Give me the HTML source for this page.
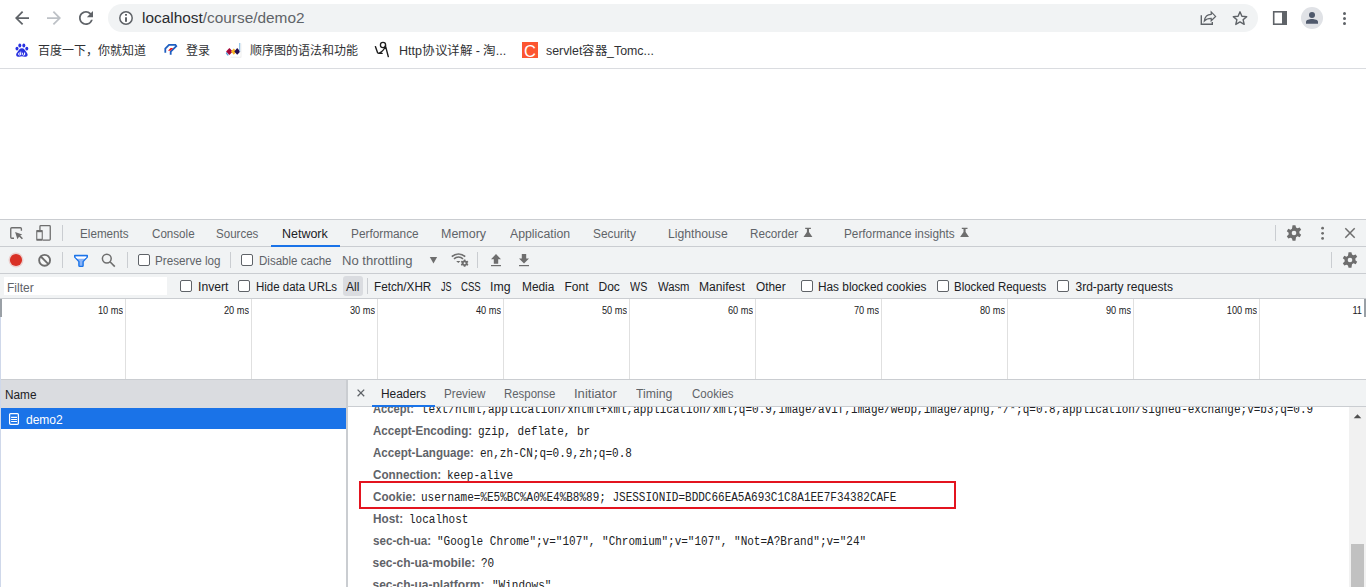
<!DOCTYPE html>
<html lang="zh-CN"><head><meta charset="utf-8">
<style>
*{margin:0;padding:0;box-sizing:border-box}
html,body{width:1366px;height:587px;overflow:hidden;background:#fff;font-family:"Liberation Sans",sans-serif;font-size:12px;color:#202124}
.a{position:absolute;white-space:pre;line-height:12px}
svg{position:absolute;overflow:visible}
.tb{background:#f1f3f4}
.hl{position:absolute;height:1px;background:#cacdd1}
.vl{position:absolute;width:1px;background:#cacdd1}
.g{color:#5f6368}
.mono{font-family:"Liberation Mono",monospace;font-size:12px;color:#202124;transform:scaleX(0.9167);transform-origin:0 0}
.hn{font-weight:bold;color:#5f6368}
.cb{position:absolute;width:12px;height:12px;border:1px solid #5f6368;border-radius:2px;background:#fff}
</style></head>
<body>
<!-- ===== Browser toolbar ===== -->
<svg style="left:0;top:0" width="1366" height="68">
  <g transform="translate(11.5 7.5) scale(.875)"><path fill="#5f6368" d="M20 11H7.83l5.59-5.59L12 4l-8 8 8 8 1.41-1.41L7.83 13H20v-2z"/></g>
  <g transform="translate(43.5 7.5) scale(.875)"><path fill="#bdc1c6" d="M12 4l-1.41 1.41L16.17 11H4v2h12.17l-5.58 5.59L12 20l8-8z"/></g>
  <g transform="translate(75.5 7.5) scale(.875)"><path fill="#5f6368" d="M17.65 6.35A7.958 7.958 0 0012 4c-4.42 0-7.99 3.58-7.99 8s3.57 8 7.99 8c3.73 0 6.84-2.55 7.73-6h-2.08A5.99 5.99 0 0112 18c-3.31 0-6-2.69-6-6s2.69-6 6-6c1.66 0 3.14.69 4.22 1.78L13 11h7V4l-2.35 2.35z"/></g>
</svg>
<div class="a" style="left:108px;top:4px;width:1150px;height:28px;border-radius:14px;background:#f1f3f4"></div>
<svg style="left:0;top:0" width="1366" height="68">
  <!-- info -->
  <circle cx="126" cy="18" r="6.2" fill="#fff" stroke="#5f6368" stroke-width="1.5"/>
  <rect x="125" y="14" width="2" height="1.7" fill="#5f6368"/>
  <rect x="125" y="17.3" width="2" height="4.5" fill="#5f6368"/>
  <!-- share -->
  <path d="M1201.3 15.2V24.3H1212.3V22" stroke="#5f6368" stroke-width="1.4" fill="none"/>
  <path d="M1204.3 21C1204.8 17 1207.5 14.3 1211.2 14.3V11.9L1215.6 16.4 1211.2 20.7V18.4C1208.3 18.4 1206 19.2 1204.3 21Z" stroke="#5f6368" stroke-width="1.2" fill="none" stroke-linejoin="miter"/>
  <!-- star -->
  <path d="M1240 11.8l1.9 4.4 4.8.4-3.6 3.1 1.1 4.7-4.2-2.5-4.2 2.5 1.1-4.7-3.6-3.1 4.8-.4z" stroke="#5f6368" stroke-width="1.4" fill="none" stroke-linejoin="round"/>
  <!-- sidebar -->
  <rect x="1273.7" y="11.8" width="12.4" height="12.4" stroke="#5f6368" stroke-width="1.6" fill="none"/>
  <rect x="1282" y="11" width="4.9" height="14" fill="#5f6368"/>
  <!-- profile -->
  <circle cx="1312" cy="18" r="11" fill="#e0e2e6"/>
  <circle cx="1312" cy="15" r="3" fill="#4f596c"/>
  <path d="M1306 23.8V21.9C1306 20 1309.3 19.1 1312 19.1S1318 20 1318 21.9V23.8z" fill="#4f596c"/>
  <!-- menu -->
  <circle cx="1344.5" cy="13.5" r="1.5" fill="#5f6368"/>
  <circle cx="1344.5" cy="18.5" r="1.5" fill="#5f6368"/>
  <circle cx="1344.5" cy="23.5" r="1.5" fill="#5f6368"/>

  <!-- baidu paw -->
  <g fill="#2932e1">
    <ellipse cx="19.8" cy="45.4" rx="1.5" ry="2"/>
    <ellipse cx="23.8" cy="45.4" rx="1.5" ry="2"/>
    <ellipse cx="17" cy="48.6" rx="1.5" ry="1.9"/>
    <ellipse cx="26.8" cy="48.6" rx="1.5" ry="1.9"/>
    <path d="M21.9 48.3c-2.2 0-3.2 2.2-4.4 3.6-1.3 1.4-1.6 2.5-1.2 3.5.5 1.2 1.8 1.4 2.8 1.3 1.1-.1 1.9-.4 2.8-.4s1.7.3 2.8.4c1 .1 2.3-.1 2.8-1.3.4-1-.1-2.1-1.2-3.5-1.2-1.4-2.2-3.6-4.4-3.6z"/>
  </g>
  <g stroke="#fff" stroke-width=".9" fill="none"><circle cx="19.5" cy="54" r="1.05"/><path d="M20.75 51.6v3.6M22.5 52.7v1.5a1.05 1.05 0 002.1 0v-1.5v2.5"/></g>
  <!-- login icon -->
  <path d="M165.3 52.8v-4.3l3.7-3.7h6.4l.9 1.3-5.6 5.6v3" stroke="#1f5fc1" stroke-width="1.8" fill="none" stroke-linejoin="miter"/>
  <path d="M168 50.8l2.6-2.8h2.6l-2.8 2.8z" fill="#e8131b"/>
  <!-- sequence icon -->
  <path d="M226.2 51.8l2.4 3 -.6 1.2-2.2-2.6z" fill="#5ba3da"/>
  <path d="M229.4 47.9l3.4 3.5-3.4 3.5-3.3-3.5z" fill="#a4073a"/>
  <path d="M233.8 48.5l2.9 3-2.9 3.3-2.8-3.3z" fill="#f6b526"/>
  <path d="M237.2 48.1l3.1 3.3-3.1 3.4-2.9-3.4z" fill="#230c52"/>
  <rect x="239.1" y="43" width="1.2" height="8.6" fill="#8cc3ea"/>
  <path d="M230.5 57.3h10.6M241 43.5v13.8" stroke="#e8e8e8" stroke-width="0.7"/>
  <!-- http icon -->
  <circle cx="383" cy="45" r="2.6" stroke="#1d1d1d" stroke-width="1.3" fill="none"/>
  <path d="M375.4 46.6l2.2 6.2 1.2.6h3.3M385.5 45.6c-.8 3-2.5 5.6-6.2 7.6M385.6 46.4l2.7 10.2" stroke="#1d1d1d" stroke-width="1.4" fill="none" stroke-linecap="round"/>
</svg>
<div class="a" style="left:142px;top:10px;font-size:15.4px;line-height:15px;color:#2a2b2e">localhost<span style="color:#5f6368">/course/demo2</span></div>

<!-- bookmarks -->
<div class="a" style="left:38px;top:45px;color:#303134">百度一下，你就知道</div>
<div class="a" style="left:186px;top:45px;color:#303134">登录</div>
<div class="a" style="left:250px;top:45px;color:#303134">顺序图的语法和功能</div>
<div class="a" style="left:399px;top:45px;color:#303134;transform:scaleX(1.045);transform-origin:0 0">Http协议详解 - 淘...</div>
<div class="a" style="left:546px;top:45px;color:#303134;transform:scaleX(1.03);transform-origin:0 0">servlet容器_Tomc...</div>
<div class="a" style="left:522px;top:42px;width:16px;height:16px;background:#fc5531"></div>
<div class="a" style="left:522px;top:42.5px;width:16px;height:16px;color:#fff;font-size:16.5px;line-height:16px;text-align:center">C</div>
<div class="hl" style="left:0;top:68px;width:1366px;background:#dadce0"></div>

<!-- ===== DevTools ===== -->
<div class="a tb" style="left:0;top:220px;width:1366px;height:79px"></div>
<div class="hl" style="left:0;top:219px;width:1366px"></div>
<div class="hl" style="left:0;top:246px;width:1366px"></div>
<div class="hl" style="left:0;top:273px;width:1366px"></div>
<div class="hl" style="left:0;top:298px;width:1366px"></div>

<svg style="left:0;top:219px" width="1366" height="80">
  <!-- inspect -->
  <path d="M14 19.25H11.75a1 1 0 01-1-1V9.75a1 1 0 011-1H20.4a1 1 0 011 1V11.8" stroke="#6e6e6e" stroke-width="1.35" fill="none"/>
  <path d="M15.1 13.1L22.2 15.4 19.6 17 17.4 20.2z" fill="#6e6e6e"/>
  <path d="M19.2 16.6L22.4 19.8" stroke="#6e6e6e" stroke-width="1.5"/>
  <!-- device -->
  <path d="M39.95 11V7.45a.8.8 0 01.8-.8h8.7a.8.8 0 01.8.8v12.9a.8.8 0 01-.8.8H42.8" stroke="#6e6e6e" stroke-width="1.3" fill="none"/>
  <rect x="36.2" y="11" width="6.6" height="10.8" rx=".8" fill="#6e6e6e"/>
  <rect x="37.3" y="13.2" width="4.4" height="6.6" fill="#f1f3f4"/>
  <rect x="62" y="6" width="1" height="16" fill="#cacdd1"/>
  <!-- flasks -->
  <path d="M805.2 8.7h5.7v1.2h-1.9v3l3.4 5h-8.9l3.4-5v-3h-1.7z" fill="#6e6e6e"/>
  <path d="M961.8 8.7h5.7v1.2h-1.9v3l3.4 5h-8.9l3.4-5v-3h-1.7z" fill="#6e6e6e"/>
  <!-- right separators & icons -->
  <rect x="1275" y="6" width="1" height="16" fill="#cacdd1"/>
  <g transform="translate(1294 14) scale(1.12)" fill="#6e6e6e">
    <path d="M-1.3-7h2.6l.5 2.1 1.3.7 2-.8 1.3 2.2-1.6 1.4v1.6l1.6 1.4-1.3 2.2-2-.8-1.3.7L1.3 7h-2.6l-.5-2.1-1.3-.7-2 .8-1.3-2.2 1.6-1.4v-1.6l-1.6-1.4 1.3-2.2 2 .8 1.3-.7z"/>
  </g>
  <circle cx="1294" cy="14" r="2.3" fill="#f1f3f4"/>
  <circle cx="1322.6" cy="9.2" r="1.4" fill="#6e6e6e"/>
  <circle cx="1322.6" cy="14.3" r="1.4" fill="#6e6e6e"/>
  <circle cx="1322.6" cy="19.4" r="1.4" fill="#6e6e6e"/>
  <path d="M1345.3 9.3l9.4 9.4M1354.7 9.3l-9.4 9.4" stroke="#6e6e6e" stroke-width="1.5"/>

  <!-- toolbar row -->
  <circle cx="16" cy="41" r="7.5" fill="#d93025" opacity=".18"/>
  <circle cx="16" cy="41" r="6.1" fill="#d93025"/>
  <circle cx="44.6" cy="41.3" r="5.45" stroke="#6e6e6e" stroke-width="1.9" fill="#f8f9f9"/>
  <path d="M40.8 37.5L48.4 45.1" stroke="#6e6e6e" stroke-width="1.9"/>
  <rect x="62" y="33" width="1" height="16" fill="#cacdd1"/>
  <path d="M74.7 36.4h12.6v1.6l-4.2 4.6v4a.8.8 0 01-.8.8h-2.6a.8.8 0 01-.8-.8v-4l-4.2-4.6z" fill="#8ab4f8" stroke="#1a73e8" stroke-width="1.4" stroke-linejoin="round"/>
  <path d="M75.8 37.7h10.4v.5l-1.4 1.5h-7.6l-1.4-1.5z" fill="#fff"/>
  <circle cx="106.8" cy="39.6" r="4.4" stroke="#6e6e6e" stroke-width="1.5" fill="none"/>
  <path d="M110 42.8l4.8 4.8" stroke="#6e6e6e" stroke-width="1.6"/>
  <rect x="127" y="33" width="1" height="16" fill="#cacdd1"/>
  <rect x="230" y="33" width="1" height="16" fill="#cacdd1"/>
  <path d="M429.8 37.9h7.3l-3.65 6.7z" fill="#6e6e6e"/>
  <!-- wifi -->
  <path d="M451.8 37.6a9.6 9.6 0 0113.4 0M454 39.9a6.4 6.4 0 019 0" stroke="#6e6e6e" stroke-width="1.5" fill="none"/>
  <path d="M456.2 42.1h4.2l-2.1 2z" fill="#6e6e6e"/>
  <g transform="translate(464.6 44.2)" fill="#6e6e6e">
    <path d="M-.8-3.6h1.6l.3 1.1.8.4 1.1-.4.8 1.3-.9.8v.8l.9.8-.8 1.3-1.1-.4-.8.4-.3 1.1h-1.6l-.3-1.1-.8-.4-1.1.4-.8-1.3.9-.8v-.8l-.9-.8.8-1.3 1.1.4.8-.4z"/>
  </g>
  <circle cx="464.6" cy="44.2" r="1" fill="#f1f3f4"/>
  <rect x="477" y="33" width="1" height="16" fill="#cacdd1"/>
  <path d="M496 35l5 5.2h-2.8v4.5h-4.4v-4.5h-2.8z" fill="#6e6e6e"/>
  <rect x="491" y="46" width="10" height="1.2" fill="#6e6e6e"/>
  <path d="M524 44.6l5-5.2h-2.8v-4.5h-4.4v4.5h-2.8z" fill="#6e6e6e"/>
  <rect x="519" y="46" width="10" height="1.2" fill="#6e6e6e"/>
  <rect x="1331" y="33" width="1" height="16" fill="#cacdd1"/>
  <g transform="translate(1350 41) scale(1.12)" fill="#6e6e6e">
    <path d="M-1.3-7h2.6l.5 2.1 1.3.7 2-.8 1.3 2.2-1.6 1.4v1.6l1.6 1.4-1.3 2.2-2-.8-1.3.7L1.3 7h-2.6l-.5-2.1-1.3-.7-2 .8-1.3-2.2 1.6-1.4v-1.6l-1.6-1.4 1.3-2.2 2 .8 1.3-.7z"/>
  </g>
  <circle cx="1350" cy="41" r="2.3" fill="#f1f3f4"/>
</svg>

<!-- tab labels -->
<div class="a g" style="left:79.53px;top:228px;transform:scaleX(0.9730);transform-origin:0 0">Elements</div>
<div class="a g" style="left:151.60px;top:228px;transform:scaleX(0.9680);transform-origin:0 0">Console</div>
<div class="a g" style="left:216.44px;top:228px;transform:scaleX(0.9630);transform-origin:0 0">Sources</div>
<div class="a" style="left:281.66px;top:228px;color:#202124;transform:scaleX(1.0400);transform-origin:0 0">Network</div>
<div class="a g" style="left:350.81px;top:228px;transform:scaleX(0.9850);transform-origin:0 0">Performance</div>
<div class="a g" style="left:440.96px;top:228px;transform:scaleX(1.0400);transform-origin:0 0">Memory</div>
<div class="a g" style="left:509.90px;top:228px;transform:scaleX(1.0240);transform-origin:0 0">Application</div>
<div class="a g" style="left:592.51px;top:228px;transform:scaleX(0.9880);transform-origin:0 0">Security</div>
<div class="a g" style="left:667.68px;top:228px;transform:scaleX(1.0160);transform-origin:0 0">Lighthouse</div>
<div class="a g" style="left:749.82px;top:228px;transform:scaleX(0.9750);transform-origin:0 0">Recorder</div>
<div class="a g" style="left:843.92px;top:228px;transform:scaleX(0.9820);transform-origin:0 0">Performance insights</div>
<div class="a" style="left:271px;top:245px;width:69px;height:2px;background:#1a73e8"></div>

<!-- toolbar row 2 -->
<div class="cb" style="left:138px;top:254px"></div>
<div class="a g" style="left:155.43px;top:255px;transform:scaleX(0.9730);transform-origin:0 0">Preserve log</div>
<div class="cb" style="left:241px;top:254px"></div>
<div class="a g" style="left:258.74px;top:255px;transform:scaleX(0.9620);transform-origin:0 0">Disable cache</div>
<div class="a g" style="left:341.51px;top:255px;transform:scaleX(1.0890);transform-origin:0 0">No throttling</div>

<!-- filter row -->
<div class="a" style="left:4px;top:277px;width:163px;height:18px;background:#fff"></div>
<div class="a g" style="left:7px;top:282px">Filter</div>
<div class="cb" style="left:180px;top:280px"></div>
<div class="a" style="left:197.59px;top:281px;transform:scaleX(1.0140);transform-origin:0 0">Invert</div>
<div class="cb" style="left:238px;top:280px"></div>
<div class="a" style="left:255.64px;top:281px;transform:scaleX(0.9570);transform-origin:0 0">Hide data URLs</div>
<div class="a" style="left:343px;top:276px;width:20px;height:20px;border-radius:3px;background:#dadce0"></div>
<div class="a" style="left:346px;top:281px">All</div>
<div class="vl" style="left:367px;top:278px;height:16px"></div>
<div class="a" style="left:373.92px;top:281px;transform:scaleX(0.9770);transform-origin:0 0">Fetch/XHR</div>
<div class="a" style="left:440.50px;top:281px;transform:scaleX(0.7500);transform-origin:0 0">JS</div>
<div class="a" style="left:461.00px;top:281px;transform:scaleX(0.8000);transform-origin:0 0">CSS</div>
<div class="a" style="left:490.47px;top:281px;transform:scaleX(1.0260);transform-origin:0 0">Img</div>
<div class="a" style="left:521.91px;top:281px;transform:scaleX(0.9880);transform-origin:0 0">Media</div>
<div class="a" style="left:564.50px;top:281px">Font</div>
<div class="a" style="left:598.50px;top:281px">Doc</div>
<div class="a" style="left:630.00px;top:281px;transform:scaleX(0.8950);transform-origin:0 0">WS</div>
<div class="a" style="left:658.00px;top:281px;transform:scaleX(0.9390);transform-origin:0 0">Wasm</div>
<div class="a" style="left:698.99px;top:281px;transform:scaleX(1.0090);transform-origin:0 0">Manifest</div>
<div class="a" style="left:756.00px;top:281px;transform:scaleX(0.9870);transform-origin:0 0">Other</div>
<div class="cb" style="left:801px;top:280px"></div>
<div class="a" style="left:818.31px;top:281px;transform:scaleX(0.9850);transform-origin:0 0">Has blocked cookies</div>
<div class="cb" style="left:937px;top:280px"></div>
<div class="a" style="left:954.45px;top:281px;transform:scaleX(0.9540);transform-origin:0 0">Blocked Requests</div>
<div class="cb" style="left:1057px;top:280px"></div>
<div class="a" style="left:1075.50px;top:281px">3rd-party requests</div>

<!-- timeline overview -->
<div class="a" style="left:0;top:299px;width:1366px;height:80px;background:#fff"></div>
<div class="hl" style="left:0;top:379px;width:1366px"></div>
<div class="vl" style="left:125px;top:299px;height:80px;background:#e0e0e0"></div>
<div class="vl" style="left:251px;top:299px;height:80px;background:#e0e0e0"></div>
<div class="vl" style="left:377px;top:299px;height:80px;background:#e0e0e0"></div>
<div class="vl" style="left:503px;top:299px;height:80px;background:#e0e0e0"></div>
<div class="vl" style="left:629px;top:299px;height:80px;background:#e0e0e0"></div>
<div class="vl" style="left:755px;top:299px;height:80px;background:#e0e0e0"></div>
<div class="vl" style="left:881px;top:299px;height:80px;background:#e0e0e0"></div>
<div class="vl" style="left:1007px;top:299px;height:80px;background:#e0e0e0"></div>
<div class="vl" style="left:1133px;top:299px;height:80px;background:#e0e0e0"></div>
<div class="vl" style="left:1259px;top:299px;height:80px;background:#e0e0e0"></div>
<div class="a" style="left:0;top:299px;width:2px;height:18px;background:#9aa0a6"></div>
<div class="a" style="left:0;top:317px;width:1px;height:270px;background:#cfd8ea"></div>
<div class="a" style="left:1364px;top:299px;width:2px;height:18px;background:#9aa0a6"></div>
<div class="a" style="top:305.5px;left:0;width:123px;text-align:right;font-size:10px;line-height:10px;transform:scaleX(0.92);transform-origin:100% 0">10 ms</div>
<div class="a" style="top:305.5px;left:126px;width:123px;text-align:right;font-size:10px;line-height:10px;transform:scaleX(0.92);transform-origin:100% 0">20 ms</div>
<div class="a" style="top:305.5px;left:252px;width:123px;text-align:right;font-size:10px;line-height:10px;transform:scaleX(0.92);transform-origin:100% 0">30 ms</div>
<div class="a" style="top:305.5px;left:378px;width:123px;text-align:right;font-size:10px;line-height:10px;transform:scaleX(0.92);transform-origin:100% 0">40 ms</div>
<div class="a" style="top:305.5px;left:504px;width:123px;text-align:right;font-size:10px;line-height:10px;transform:scaleX(0.92);transform-origin:100% 0">50 ms</div>
<div class="a" style="top:305.5px;left:630px;width:123px;text-align:right;font-size:10px;line-height:10px;transform:scaleX(0.92);transform-origin:100% 0">60 ms</div>
<div class="a" style="top:305.5px;left:756px;width:123px;text-align:right;font-size:10px;line-height:10px;transform:scaleX(0.92);transform-origin:100% 0">70 ms</div>
<div class="a" style="top:305.5px;left:882px;width:123px;text-align:right;font-size:10px;line-height:10px;transform:scaleX(0.92);transform-origin:100% 0">80 ms</div>
<div class="a" style="top:305.5px;left:1008px;width:123px;text-align:right;font-size:10px;line-height:10px;transform:scaleX(0.92);transform-origin:100% 0">90 ms</div>
<div class="a" style="top:305.5px;left:1134px;width:123px;text-align:right;font-size:10px;line-height:10px;transform:scaleX(0.92);transform-origin:100% 0">100 ms</div>
<div class="a" style="top:305.5px;left:1260px;width:102px;text-align:right;font-size:10px;line-height:10px;transform:scaleX(0.92);transform-origin:100% 0">11</div>

<!-- name column -->
<div class="a" style="left:1px;top:380px;width:345px;height:28px;background:#dadce0"></div>
<div class="a" style="left:4.52px;top:389px;transform:scaleX(0.9840);transform-origin:0 0">Name</div>
<div class="a" style="left:1px;top:408px;width:345px;height:21px;background:#1a73e8"></div>
<svg style="left:0;top:0" width="20" height="430">
  <rect x="9.6" y="413.5" width="8.8" height="10.8" rx="1" stroke="#fff" stroke-width="1.25" fill="none"/>
  <path d="M11.1 417.4h5.9M11.1 419.45h5.9M11.1 421.5h5.9" stroke="#fff" stroke-width="1.1"/>
</svg>
<div class="a" style="left:26.00px;top:414px;color:#fff">demo2</div>
<div class="a" style="left:346px;top:380px;width:2px;height:207px;background:#cacdd1"></div>

<!-- headers panel -->
<div class="a tb" style="left:348px;top:380px;width:1018px;height:26px"></div>
<div class="hl" style="left:348px;top:406px;width:1018px"></div>
<svg style="left:0;top:0" width="1366" height="420">
  <path d="M357.6 389.6l6.6 6.6M364.2 389.6l-6.6 6.6" stroke="#5f6368" stroke-width="1.3"/>
</svg>
<div class="a" style="left:380.61px;top:388px;transform:scaleX(0.9930);transform-origin:0 0">Headers</div>
<div class="a g" style="left:443.63px;top:388px;transform:scaleX(0.9690);transform-origin:0 0">Preview</div>
<div class="a g" style="left:503.65px;top:388px;transform:scaleX(0.9510);transform-origin:0 0">Response</div>
<div class="a g" style="left:573.51px;top:388px;transform:scaleX(1.0870);transform-origin:0 0">Initiator</div>
<div class="a g" style="left:635.50px;top:388px;transform:scaleX(1.0200);transform-origin:0 0">Timing</div>
<div class="a g" style="left:691.70px;top:388px;transform:scaleX(0.9600);transform-origin:0 0">Cookies</div>
<div class="a" style="left:372px;top:405px;width:63px;height:2px;background:#1a73e8"></div>

<!-- header rows -->
<div class="a" style="left:0;top:407px;width:1349px;height:180px;overflow:hidden">
  <div class="a hn" style="left:372.5px;top:-4px;transform:scaleX(0.93);transform-origin:0 0">Accept:</div><div class="a mono" style="left:421.5px;top:-2px;line-height:11px">text/html,application/xhtml+xml,application/xml;q=0.9,image/avif,image/webp,image/apng,*/*;q=0.8,application/signed-exchange;v=b3;q=0.9</div>
  <div class="a hn" style="left:372.5px;top:18px;transform:scaleX(0.965);transform-origin:0 0">Accept-Encoding:</div><div class="a mono" style="left:477.7px;top:20px;line-height:11px">gzip, deflate, br</div>
  <div class="a hn" style="left:372.5px;top:40px;transform:scaleX(0.963);transform-origin:0 0">Accept-Language:</div><div class="a mono" style="left:479.9px;top:42px;line-height:11px">en,zh-CN;q=0.9,zh;q=0.8</div>
  <div class="a hn" style="left:372.5px;top:62px;transform:scaleX(0.975);transform-origin:0 0">Connection:</div><div class="a mono" style="left:446.9px;top:64px;line-height:11px">keep-alive</div>
  <div class="a hn" style="left:372.5px;top:84px;transform:scaleX(0.975);transform-origin:0 0">Cookie:</div><div class="a mono" style="left:421.0px;top:86px;line-height:11px">username=%E5%BC%A0%E4%B8%89; JSESSIONID=BDDC66EA5A693C1C8A1EE7F34382CAFE</div>
  <div class="a hn" style="left:372.5px;top:106px;transform:scaleX(0.98);transform-origin:0 0">Host:</div><div class="a mono" style="left:409.0px;top:108px;line-height:11px">localhost</div>
  <div class="a hn" style="left:372.5px;top:128px;transform:scaleX(0.97);transform-origin:0 0">sec-ch-ua:</div><div class="a mono" style="left:436.5px;top:130px;line-height:11px">"Google Chrome";v="107", "Chromium";v="107", "Not=A?Brand";v="24"</div>
  <div class="a hn" style="left:372.5px;top:150px;transform:scaleX(1.0);transform-origin:0 0">sec-ch-ua-mobile:</div><div class="a mono" style="left:480.8px;top:152px;line-height:11px">?0</div>
  <div class="a hn" style="left:372.5px;top:172px;transform:scaleX(1.0);transform-origin:0 0">sec-ch-ua-platform:</div><div class="a mono" style="left:491.8px;top:174px;line-height:11px">"Windows"</div>
</div>
<!-- red box -->
<div class="a" style="left:359px;top:481px;width:597px;height:28px;border:2px solid #e3141f"></div>

<!-- scrollbar -->
<div class="a" style="left:1349px;top:407px;width:17px;height:180px;background:#f1f1f1"></div>
<svg style="left:0;top:0" width="1366" height="587"><path d="M1353.7 418.2h7.6l-3.8-4z" fill="#505050"/></svg>
<div class="a" style="left:1351px;top:544px;width:13px;height:43px;background:#c1c1c1"></div>

</body></html>
